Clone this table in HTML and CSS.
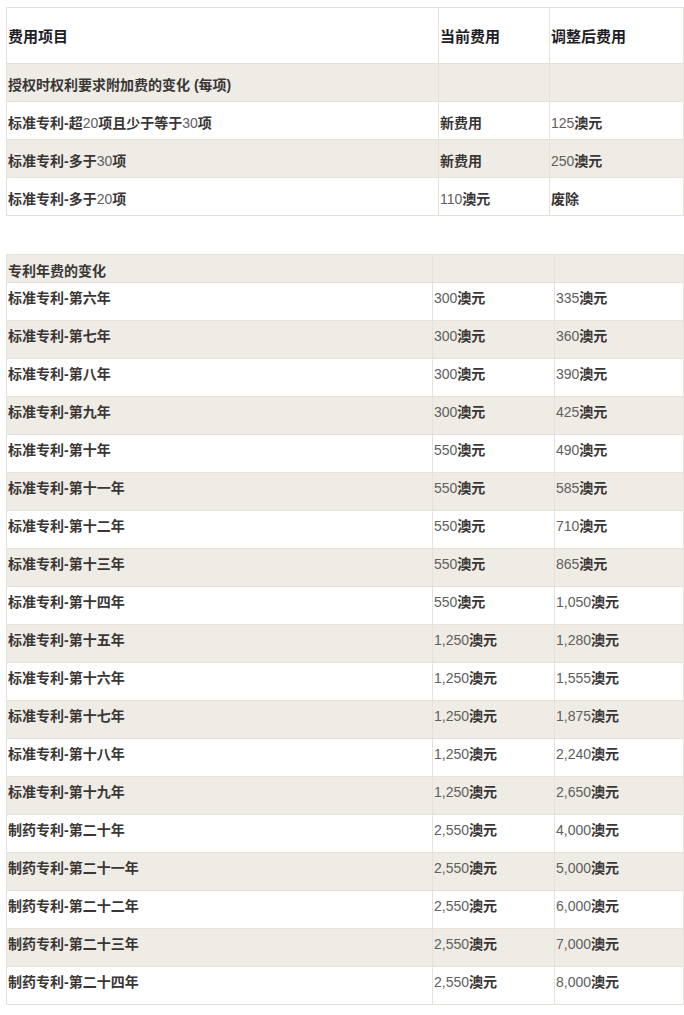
FILE: index.html
```html
<!DOCTYPE html>
<html lang="zh-CN">
<head>
<meta charset="utf-8">
<title>专利费用变化</title>
<link rel="stylesheet" href="styles.css">
</head>
<body>
<div class="page">
  <table class="fees fees-a">
    <colgroup><col class="c1"><col class="c2"><col class="c3"></colgroup>
    <tr class="head"><th>费用项目</th><th>当前费用</th><th>调整后费用</th></tr>
    <tr class="alt"><td>授权时权利要求附加费的变化 (每项)</td><td></td><td></td></tr>
    <tr><td>标准专利-超<span class="n">20</span>项且少于等于<span class="n">30</span>项</td><td>新费用</td><td><span class="n">125</span>澳元</td></tr>
    <tr class="alt"><td>标准专利-多于<span class="n">30</span>项</td><td>新费用</td><td><span class="n">250</span>澳元</td></tr>
    <tr><td>标准专利-多于<span class="n">20</span>项</td><td><span class="n">110</span>澳元</td><td>废除</td></tr>
  </table>

  <table class="fees fees-b">
    <colgroup><col class="c1"><col class="c2"><col class="c3"></colgroup>
    <tr class="alt head2"><td>专利年费的变化</td><td></td><td></td></tr>
    <tr><td>标准专利-第六年</td><td><span class="n">300</span>澳元</td><td><span class="n">335</span>澳元</td></tr>
    <tr class="alt"><td>标准专利-第七年</td><td><span class="n">300</span>澳元</td><td><span class="n">360</span>澳元</td></tr>
    <tr><td>标准专利-第八年</td><td><span class="n">300</span>澳元</td><td><span class="n">390</span>澳元</td></tr>
    <tr class="alt"><td>标准专利-第九年</td><td><span class="n">300</span>澳元</td><td><span class="n">425</span>澳元</td></tr>
    <tr><td>标准专利-第十年</td><td><span class="n">550</span>澳元</td><td><span class="n">490</span>澳元</td></tr>
    <tr class="alt"><td>标准专利-第十一年</td><td><span class="n">550</span>澳元</td><td><span class="n">585</span>澳元</td></tr>
    <tr><td>标准专利-第十二年</td><td><span class="n">550</span>澳元</td><td><span class="n">710</span>澳元</td></tr>
    <tr class="alt"><td>标准专利-第十三年</td><td><span class="n">550</span>澳元</td><td><span class="n">865</span>澳元</td></tr>
    <tr><td>标准专利-第十四年</td><td><span class="n">550</span>澳元</td><td><span class="n">1,050</span>澳元</td></tr>
    <tr class="alt"><td>标准专利-第十五年</td><td><span class="n">1,250</span>澳元</td><td><span class="n">1,280</span>澳元</td></tr>
    <tr><td>标准专利-第十六年</td><td><span class="n">1,250</span>澳元</td><td><span class="n">1,555</span>澳元</td></tr>
    <tr class="alt"><td>标准专利-第十七年</td><td><span class="n">1,250</span>澳元</td><td><span class="n">1,875</span>澳元</td></tr>
    <tr><td>标准专利-第十八年</td><td><span class="n">1,250</span>澳元</td><td><span class="n">2,240</span>澳元</td></tr>
    <tr class="alt"><td>标准专利-第十九年</td><td><span class="n">1,250</span>澳元</td><td><span class="n">2,650</span>澳元</td></tr>
    <tr><td>制药专利-第二十年</td><td><span class="n">2,550</span>澳元</td><td><span class="n">4,000</span>澳元</td></tr>
    <tr class="alt"><td>制药专利-第二十一年</td><td><span class="n">2,550</span>澳元</td><td><span class="n">5,000</span>澳元</td></tr>
    <tr><td>制药专利-第二十二年</td><td><span class="n">2,550</span>澳元</td><td><span class="n">6,000</span>澳元</td></tr>
    <tr class="alt"><td>制药专利-第二十三年</td><td><span class="n">2,550</span>澳元</td><td><span class="n">7,000</span>澳元</td></tr>
    <tr><td>制药专利-第二十四年</td><td><span class="n">2,550</span>澳元</td><td><span class="n">8,000</span>澳元</td></tr>
  </table>
</div>
</body>
</html>
```
FILE: styles.css
```css
html, body {
  margin: 0;
  padding: 0;
  background: #ffffff;
}

.page {
  padding: 7px 0 0 6px;
}

.fees {
  table-layout: fixed;
  border-collapse: separate;
  border-spacing: 0;
  width: 677px;
  border-top: 1px solid #e4e2db;
  border-left: 1px solid #e4e2db;
  font-family: "Liberation Sans", "Noto Sans CJK SC", sans-serif;
  font-size: 14px;
  font-weight: 700;
  color: #3a3636;
}

.fees th,
.fees td {
  border-right: 1px solid #e4e2db;
  border-bottom: 1px solid #e4e2db;
  text-align: left;
  vertical-align: top;
  line-height: 20px;
  padding: 0 0 0 1px;
  white-space: nowrap;
  overflow: hidden;
}

.n {
  color: #606060;
  font-weight: 400;
}

.alt td {
  background: #eeece5;
}

/* table A */
.fees-a .c1 { width: 432px; }
.fees-a .c2 { width: 111px; }
.fees-a .c3 { width: 134px; }

.fees-a th {
  font-size: 15px;
  font-weight: 700;
  color: #221c26;
  padding-top: 19px;
  padding-bottom: 16px;
}

.fees-a td {
  padding-top: 11px;
  padding-bottom: 6px;
}

/* table B */
.fees-b {
  margin-top: 38px;
}

.fees-b .c1 { width: 426px; }
.fees-b .c2 { width: 122px; }
.fees-b .c3 { width: 129px; }

.fees-b td {
  padding-top: 5px;
  padding-bottom: 12px;
}

.fees-b .head2 td {
  padding-top: 6px;
  padding-bottom: 1px;
}
```
